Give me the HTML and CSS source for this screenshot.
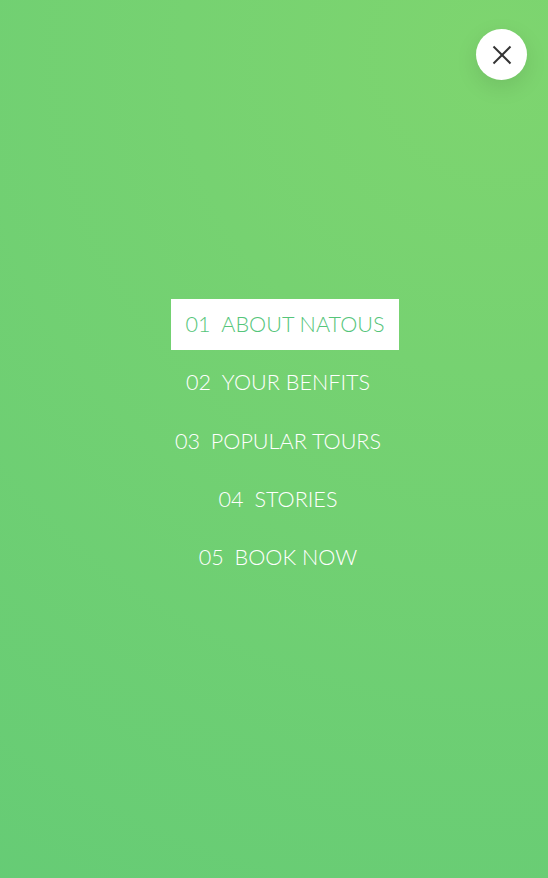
FILE: index.html
```html
<!DOCTYPE html>
<html lang="en">
<head>
<meta charset="utf-8">
<title>Natours navigation</title>
<link rel="stylesheet" href="styles.css">
</head>
<body>
<div class="navigation">
  <button class="navigation__button" aria-label="Close menu">
    <svg class="navigation__icon" width="20" height="20" viewBox="0 0 20 20">
      <line x1="1.5" y1="1.5" x2="18.5" y2="18.5" />
      <line x1="18.5" y1="1.5" x2="1.5" y2="18.5" />
    </svg>
  </button>
  <nav class="navigation__nav">
    <ul class="navigation__list">
      <li class="navigation__item"><a href="#" class="navigation__link navigation__link--active"><span class="navigation__num">01</span>About Natous</a></li>
      <li class="navigation__item"><a href="#" class="navigation__link"><span class="navigation__num">02</span>Your benfits</a></li>
      <li class="navigation__item"><a href="#" class="navigation__link"><span class="navigation__num">03</span>Popular tours</a></li>
      <li class="navigation__item"><a href="#" class="navigation__link"><span class="navigation__num">04</span>Stories</a></li>
      <li class="navigation__item"><a href="#" class="navigation__link"><span class="navigation__num">05</span>Book now</a></li>
    </ul>
  </nav>
</div>
</body>
</html>
```

FILE: styles.css
```css
* { box-sizing: border-box; }
html, body { margin: 0; padding: 0; }
body {
  font-family: Lato, "Open Sans", sans-serif;
  width: 548px;
  height: 878px;
  overflow: hidden;
}
.navigation {
  position: relative;
  width: 548px;
  height: 878px;
  background: radial-gradient(circle 3450px at 501px 54px, #7ed56f, #28b485);
  display: flex;
  align-items: center;
  justify-content: center;
}
.navigation__button {
  position: absolute;
  top: 29px;
  right: 21px;
  width: 51px;
  height: 51px;
  border: none;
  border-radius: 50%;
  background: #fff;
  box-shadow: 0 7px 22px rgba(0, 0, 0, 0.1);
  display: flex;
  align-items: center;
  justify-content: center;
  padding: 0;
  cursor: pointer;
}
.navigation__icon line {
  stroke: #333;
  stroke-width: 2;
}
.navigation__nav {
  width: 100%;
  padding-top: 4px;
}
.navigation__list {
  list-style: none;
  margin: 0;
  padding: 0 0 0 8px;
  display: flex;
  flex-direction: column;
  align-items: center;
  gap: 7.2px;
}
.navigation__item {
  display: flex;
}
.navigation__link {
  display: block;
  font-size: 21.6px;
  font-weight: 300;
  line-height: 1.7;
  padding: 7.2px 14.4px;
  color: #fff;
  text-decoration: none;
  text-transform: uppercase;
  white-space: nowrap;
}
.navigation__link--active {
  background: #fff;
  color: #55c57a;
  transform: translateX(7px);
}
.navigation__num {
  display: inline-block;
  margin-right: 10.8px;
}
```
